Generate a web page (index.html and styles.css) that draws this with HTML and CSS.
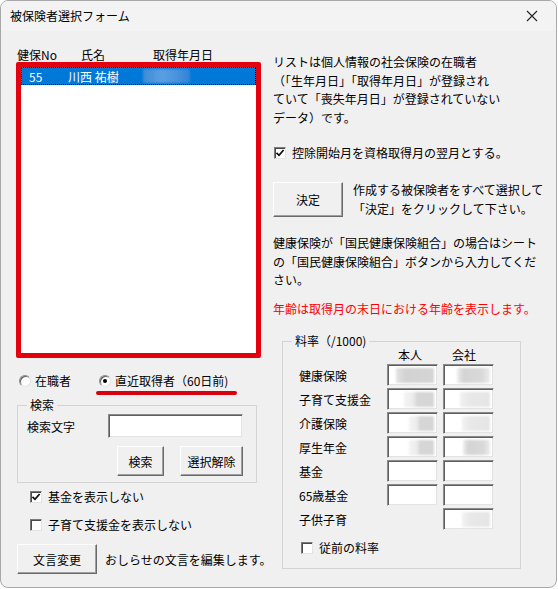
FILE: index.html
```html
<!DOCTYPE html>
<html lang="ja">
<head>
    <meta charset="UTF-8">
    <meta name="viewport" content="width=device-width, initial-scale=1.0">
    <title>被保険者選択フォーム</title>
    <link rel="stylesheet" href="styles.css">
</head>
<body>
    <div class="window">
        <div class="titlebar">
            <span class="title">被保険者選択フォーム</span>
            <svg class="close" width="12" height="12" viewBox="0 0 12 12">
                <path d="M1 1 L11 11 M11 1 L1 11" stroke="#222" stroke-width="1.1" fill="none"/>
            </svg>
        </div>
        <div class="client">
            <!-- columna izquierda: lista y busqueda -->
            <div class="left">
                <div class="list-head">
                    <span class="c-no">健保No</span>
                    <span class="c-name">氏名</span>
                    <span class="c-date">取得年月日</span>
                </div>
                <div class="listbox">
                    <div class="row selected">
                        <span class="c-no">55</span>
                        <span class="c-name">川西 祐樹</span>
                        <span class="c-date"><i class="blur-date"></i></span>
                    </div>
                </div>
                <div class="radios">
                    <label class="radio"><span class="dot"></span>在職者</label>
                    <label class="radio on"><span class="dot"></span>直近取得者（60日前)</label>
                </div>
                <div class="mark-line"></div>
                <fieldset class="group search">
                    <legend>検索</legend>
                    <div class="field-row">
                        <span class="lbl">検索文字</span>
                        <div class="textbox wide"></div>
                    </div>
                    <div class="btn-row">
                        <button class="btn b-search">検索</button>
                        <button class="btn b-clear">選択解除</button>
                    </div>
                </fieldset>
                <label class="check first">
                    <span class="box"><svg width="10" height="10" viewBox="0 0 10 10"><path d="M1.5 4.8 L4 7.3 L8.6 2" stroke="#111" stroke-width="1.8" fill="none"/></svg></span>
                    基金を表示しない
                </label>
                <label class="check">
                    <span class="box"></span>
                    子育て支援金を表示しない
                </label>
                <div class="foot">
                    <button class="btn b-text">文言変更</button>
                    <span class="foot-text">おしらせの文言を編集します。</span>
                </div>
            </div>

            <!-- columna derecha: avisos y tasas -->
            <div class="right">
                <p class="note">リストは個人情報の社会保険の在職者<br>（「生年月日」「取得年月日」が登録され<br>ていて「喪失年月日」が登録されていない<br>データ）です。</p>
                <label class="check top-check">
                    <span class="box"><svg width="10" height="10" viewBox="0 0 10 10"><path d="M1.5 4.8 L4 7.3 L8.6 2" stroke="#111" stroke-width="1.8" fill="none"/></svg></span>
                    控除開始月を資格取得月の翌月とする。
                </label>
                <div class="decide">
                    <button class="btn b-ok">決定</button>
                    <p>作成する被保険者をすべて選択して<br>「決定」をクリックして下さい。</p>
                </div>
                <p class="note kokuho">健康保険が「国民健康保険組合」の場合はシート<br>の「国民健康保険組合」ボタンから入力してくだ<br>さい。</p>
                <p class="note warn">年齢は取得月の末日における年齢を表示します。</p>
                <fieldset class="group rates">
                    <legend>料率（/1000)</legend>
                    <div class="rate-grid">
                        <span></span><span class="h1">本人</span><span class="h2">会社</span>
                        <span class="lbl">健康保険</span>
                        <div class="textbox"><i class="v dark" style="width:38px"></i></div>
                        <div class="textbox"><i class="v mid" style="width:33px"></i></div>
                        <span class="lbl">子育て支援金</span>
                        <div class="textbox"><i class="v fade" style="width:30px"></i></div>
                        <div class="textbox"><i class="v light" style="width:30px"></i></div>
                        <span class="lbl">介護保険</span>
                        <div class="textbox"><i class="v fade" style="width:25px"></i></div>
                        <div class="textbox"><i class="v light" style="width:28px"></i></div>
                        <span class="lbl">厚生年金</span>
                        <div class="textbox"><i class="v fade" style="width:25px"></i></div>
                        <div class="textbox"><i class="v mid" style="width:27px"></i></div>
                        <span class="lbl">基金</span>
                        <div class="textbox"></div>
                        <div class="textbox"></div>
                        <span class="lbl">65歳基金</span>
                        <div class="textbox"></div>
                        <div class="textbox"></div>
                        <span class="lbl">子供子育</span>
                        <span></span>
                        <div class="textbox"><i class="v light" style="width:28px"></i></div>
                    </div>
                    <label class="check old-rate">
                        <span class="box"></span>
                        従前の料率
                    </label>
                </fieldset>
            </div>
        </div>
    </div>
</body>
</html>
```

FILE: styles.css
```css
* {
    box-sizing: border-box;
}

body {
    margin: 0;
    padding: 0;
    background-color: #ffffff;
    font-family: "Noto Sans CJK JP", "Noto Sans", sans-serif;
    font-size: 12px;
    color: #000000;
}

.window {
    width: 557px;
    height: 588px;
    border: 1px solid #a8a8a8;
    border-radius: 8px;
    background-color: #f0f0f0;
    overflow: hidden;
}

.titlebar {
    height: 30px;
    display: flex;
    align-items: center;
    justify-content: space-between;
    padding: 0 18px 0 9px;
    background-color: #f3f3f3;
}

.title {
    line-height: 16px;
}

.close {
    display: block;
}

.client {
    display: flex;
    gap: 12px;
    padding: 16px 0 0 15px;
}

.left {
    width: 245px;
    flex-shrink: 0;
}

.right {
    width: 280px;
    padding-top: 6px;
}

/* cabecera y lista */
.list-head {
    display: flex;
    height: 15px;
    line-height: 15px;
    padding-left: 1px;
}

.list-head .c-no {
    width: 64px;
}

.list-head .c-name {
    width: 72px;
}

.listbox {
    height: 296px;
    border: 5px solid #e3000f;
    border-radius: 2px;
    background-color: #ffffff;
}

.row {
    display: flex;
    align-items: center;
    height: 18px;
    padding-left: 8px;
}

.row.selected {
    background-color: #0078d7;
    color: #ffffff;
    outline: 1px dotted #000000;
    outline-offset: -1px;
}

.row .c-no {
    width: 39px;
}

.row .c-name {
    width: 75px;
}

.blur-date {
    display: block;
    width: 47px;
    height: 14px;
    background: linear-gradient(to right, #3f8bd6, #5a9fe2 40%, #4b93dc 70%, #2f83d8);
    filter: blur(1px);
}

/* opciones */
.radios {
    display: flex;
    height: 16px;
    line-height: 16px;
    margin-top: 15px;
    padding-left: 3px;
}

.radio {
    display: flex;
    align-items: center;
    gap: 4px;
    margin-right: 28px;
}

.dot {
    width: 12px;
    height: 12px;
    border-radius: 50%;
    background-color: #ffffff;
    border: 1px solid #8a8a8a;
    border-right-color: #e3e3e3;
    border-bottom-color: #e3e3e3;
    box-shadow: inset 1px 1px 0 #5f5f5f;
    position: relative;
}

.radio.on .dot::after {
    content: "";
    position: absolute;
    left: 3px;
    top: 3px;
    width: 4px;
    height: 4px;
    border-radius: 50%;
    background-color: #000000;
}

.mark-line {
    width: 141px;
    height: 4px;
    margin: 2px 0 0 80px;
    border-radius: 2px;
    background-color: #d8000f;
}

/* marcos */
.group {
    margin: 0;
    border: 1px solid #d3d3d3;
    min-width: 0;
}

.group legend {
    line-height: 14px;
    padding: 0 3px;
    margin-left: 0;
}

.search {
    margin: 3px 0 0 1px;
    width: 240px;
    padding: 2px 13px 6px 9px;
}

.field-row {
    display: flex;
    align-items: center;
    justify-content: space-between;
}

.textbox {
    height: 24px;
    background-color: #ffffff;
    border: 1px solid;
    border-color: #8a8a8a #f0f0f0 #f0f0f0 #8a8a8a;
    box-shadow: inset 1px 1px 0 #5f5f5f, inset -1px -1px 0 #e3e3e3;
    display: flex;
    justify-content: flex-end;
    align-items: center;
    padding-right: 3px;
}

.textbox.wide {
    width: 135px;
}

.btn-row {
    display: flex;
    justify-content: flex-end;
    gap: 16px;
    margin-top: 8px;
}

.btn {
    font-family: inherit;
    font-size: 12px;
    color: #000000;
    background-color: #f0f0f0;
    border: 1px solid;
    border-color: #ffffff #6a6a6a #6a6a6a #ffffff;
    box-shadow: inset -1px -1px 0 #a0a0a0;
    padding: 0;
    border-radius: 0;
}

.b-search {
    width: 47px;
    height: 30px;
}

.b-clear {
    width: 63px;
    height: 30px;
}

/* casillas */
.check {
    display: flex;
    align-items: center;
    height: 16px;
    line-height: 16px;
    gap: 6px;
}

.box {
    width: 12px;
    height: 12px;
    background-color: #ffffff;
    border: 1px solid;
    border-color: #7a7a7a #e3e3e3 #e3e3e3 #7a7a7a;
    box-shadow: inset 1px 1px 0 #4a4a4a;
    display: flex;
    align-items: center;
    justify-content: center;
}

.box svg {
    display: block;
}

.left .check {
    padding-left: 14px;
    margin-top: 12px;
}

.left .check.first {
    margin-top: 6px;
}

.foot {
    display: flex;
    align-items: center;
    gap: 8px;
    margin-top: 11px;
    padding-left: 1px;
}

.foot-text {
    white-space: nowrap;
}

.b-text {
    width: 80px;
    height: 30px;
    flex-shrink: 0;
}

/* textos de la derecha */
.note {
    margin: 0;
    line-height: 18.5px;
    white-space: nowrap;
}

.top-check {
    margin-top: 18px;
    padding-left: 1px;
}

.decide {
    display: flex;
    align-items: center;
    gap: 10px;
    margin-top: 19px;
}

.decide p {
    margin: 0;
    line-height: 19px;
    white-space: nowrap;
}

.b-ok {
    width: 70px;
    height: 35px;
    flex-shrink: 0;
}

.kokuho {
    margin-top: 16px;
}

.warn {
    margin-top: 10px;
    color: #ff0000;
}

.rates {
    margin: 16px 0 0 9px;
    width: 239px;
    padding: 0 10px 12px 16px;
}

.rates legend {
    margin-left: -7px;
}

.rate-grid {
    display: grid;
    grid-template-columns: 83px 51px 51px;
    grid-template-rows: 14px repeat(7, 22px);
    column-gap: 5px;
    row-gap: 2px;
    align-items: center;
}

.rate-grid .h1,
.rate-grid .h2 {
    align-self: start;
    line-height: 14px;
}

.rate-grid .h1 {
    padding-left: 11px;
}

.rate-grid .h2 {
    padding-left: 9px;
}

.rate-grid .textbox {
    height: 22px;
}

.v {
    display: block;
    height: 15px;
    filter: blur(0.8px);
}

.v.dark {
    background: linear-gradient(to right, #e4e4e4, #d2d2d2 25%, #d5d5d5);
}

.v.mid {
    background: linear-gradient(to right, #eeeeee, #d4d4d4 20%, #d9d9d9 75%, #ececec);
}

.v.fade {
    background: linear-gradient(to right, #f4f4f4, #ececec 30%, #d6d6d6 45%, #d6d6d6);
}

.v.light {
    background: linear-gradient(to right, #f2f2f2, #e8e8e8 30%, #e6e6e6);
}

.old-rate {
    margin-top: 10px;
    padding-left: 2px;
}
```
